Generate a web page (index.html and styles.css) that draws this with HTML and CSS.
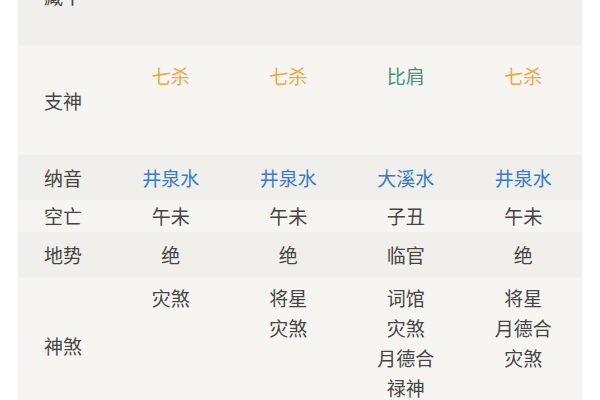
FILE: index.html
```html
<!DOCTYPE html>
<html lang="zh">
<head>
<meta charset="utf-8">
<link rel="stylesheet" href="styles.css">
</head>
<body>
<div class="table">
  <div class="row r-canggan dark">
    <div class="label">藏干</div>
    <div class="cell"></div><div class="cell"></div><div class="cell"></div><div class="cell"></div>
  </div>
  <div class="row r-zhishen light">
    <div class="label">支神</div>
    <div class="cell top orange">七杀</div>
    <div class="cell top orange">七杀</div>
    <div class="cell top green">比肩</div>
    <div class="cell top orange">七杀</div>
  </div>
  <div class="row r-nayin dark">
    <div class="label">纳音</div>
    <div class="cell blue">井泉水</div>
    <div class="cell blue">井泉水</div>
    <div class="cell blue">大溪水</div>
    <div class="cell blue">井泉水</div>
  </div>
  <div class="row r-kongwang light">
    <div class="label">空亡</div>
    <div class="cell">午未</div>
    <div class="cell">午未</div>
    <div class="cell">子丑</div>
    <div class="cell">午未</div>
  </div>
  <div class="row r-dishi dark">
    <div class="label">地势</div>
    <div class="cell">绝</div>
    <div class="cell">绝</div>
    <div class="cell">临官</div>
    <div class="cell">绝</div>
  </div>
  <div class="row r-shensha light">
    <div class="label">神煞</div>
    <div class="cell top list"><span>灾煞</span></div>
    <div class="cell top list"><span>将星</span><span>灾煞</span></div>
    <div class="cell top list"><span>词馆</span><span>灾煞</span><span>月德合</span><span>禄神</span></div>
    <div class="cell top list"><span>将星</span><span>月德合</span><span>灾煞</span></div>
  </div>
</div>
</body>
</html>
```

FILE: styles.css
```css
html, body {
  margin: 0;
  padding: 0;
  background: #ffffff;
  overflow: hidden;
}
body {
  font-family: "Noto Sans CJK SC", "Noto Sans", sans-serif;
  font-size: 19px;
  color: #454545;
}
.table {
  width: 564px;
  margin: -54px 0 0 18px;
}
.row {
  display: grid;
  grid-template-columns: 94px repeat(4, 1fr);
}
.dark { background: #f1efeb; }
.light { background: #f6f5f2; }
.label {
  display: flex;
  align-items: center;
  padding-left: 26px;
  line-height: 30px;
}
.cell {
  display: flex;
  align-items: center;
  justify-content: center;
  line-height: 30px;
}
.cell.top { align-items: flex-start; }
.cell.list {
  flex-direction: column;
  align-items: center;
  justify-content: flex-start;
}
.r-canggan { height: 100px; }
.r-zhishen { height: 109px; }
.r-zhishen .cell.top { padding-top: 15px; }
.r-nayin { height: 45px; }
.r-kongwang { height: 32px; }
.r-dishi { height: 46px; }
.r-shensha { height: 136px; }
.r-shensha .cell.top { padding-top: 5px; }
.orange { color: #eba845; }
.green { color: #3f9577; }
.blue { color: #3a7cc3; }
```
